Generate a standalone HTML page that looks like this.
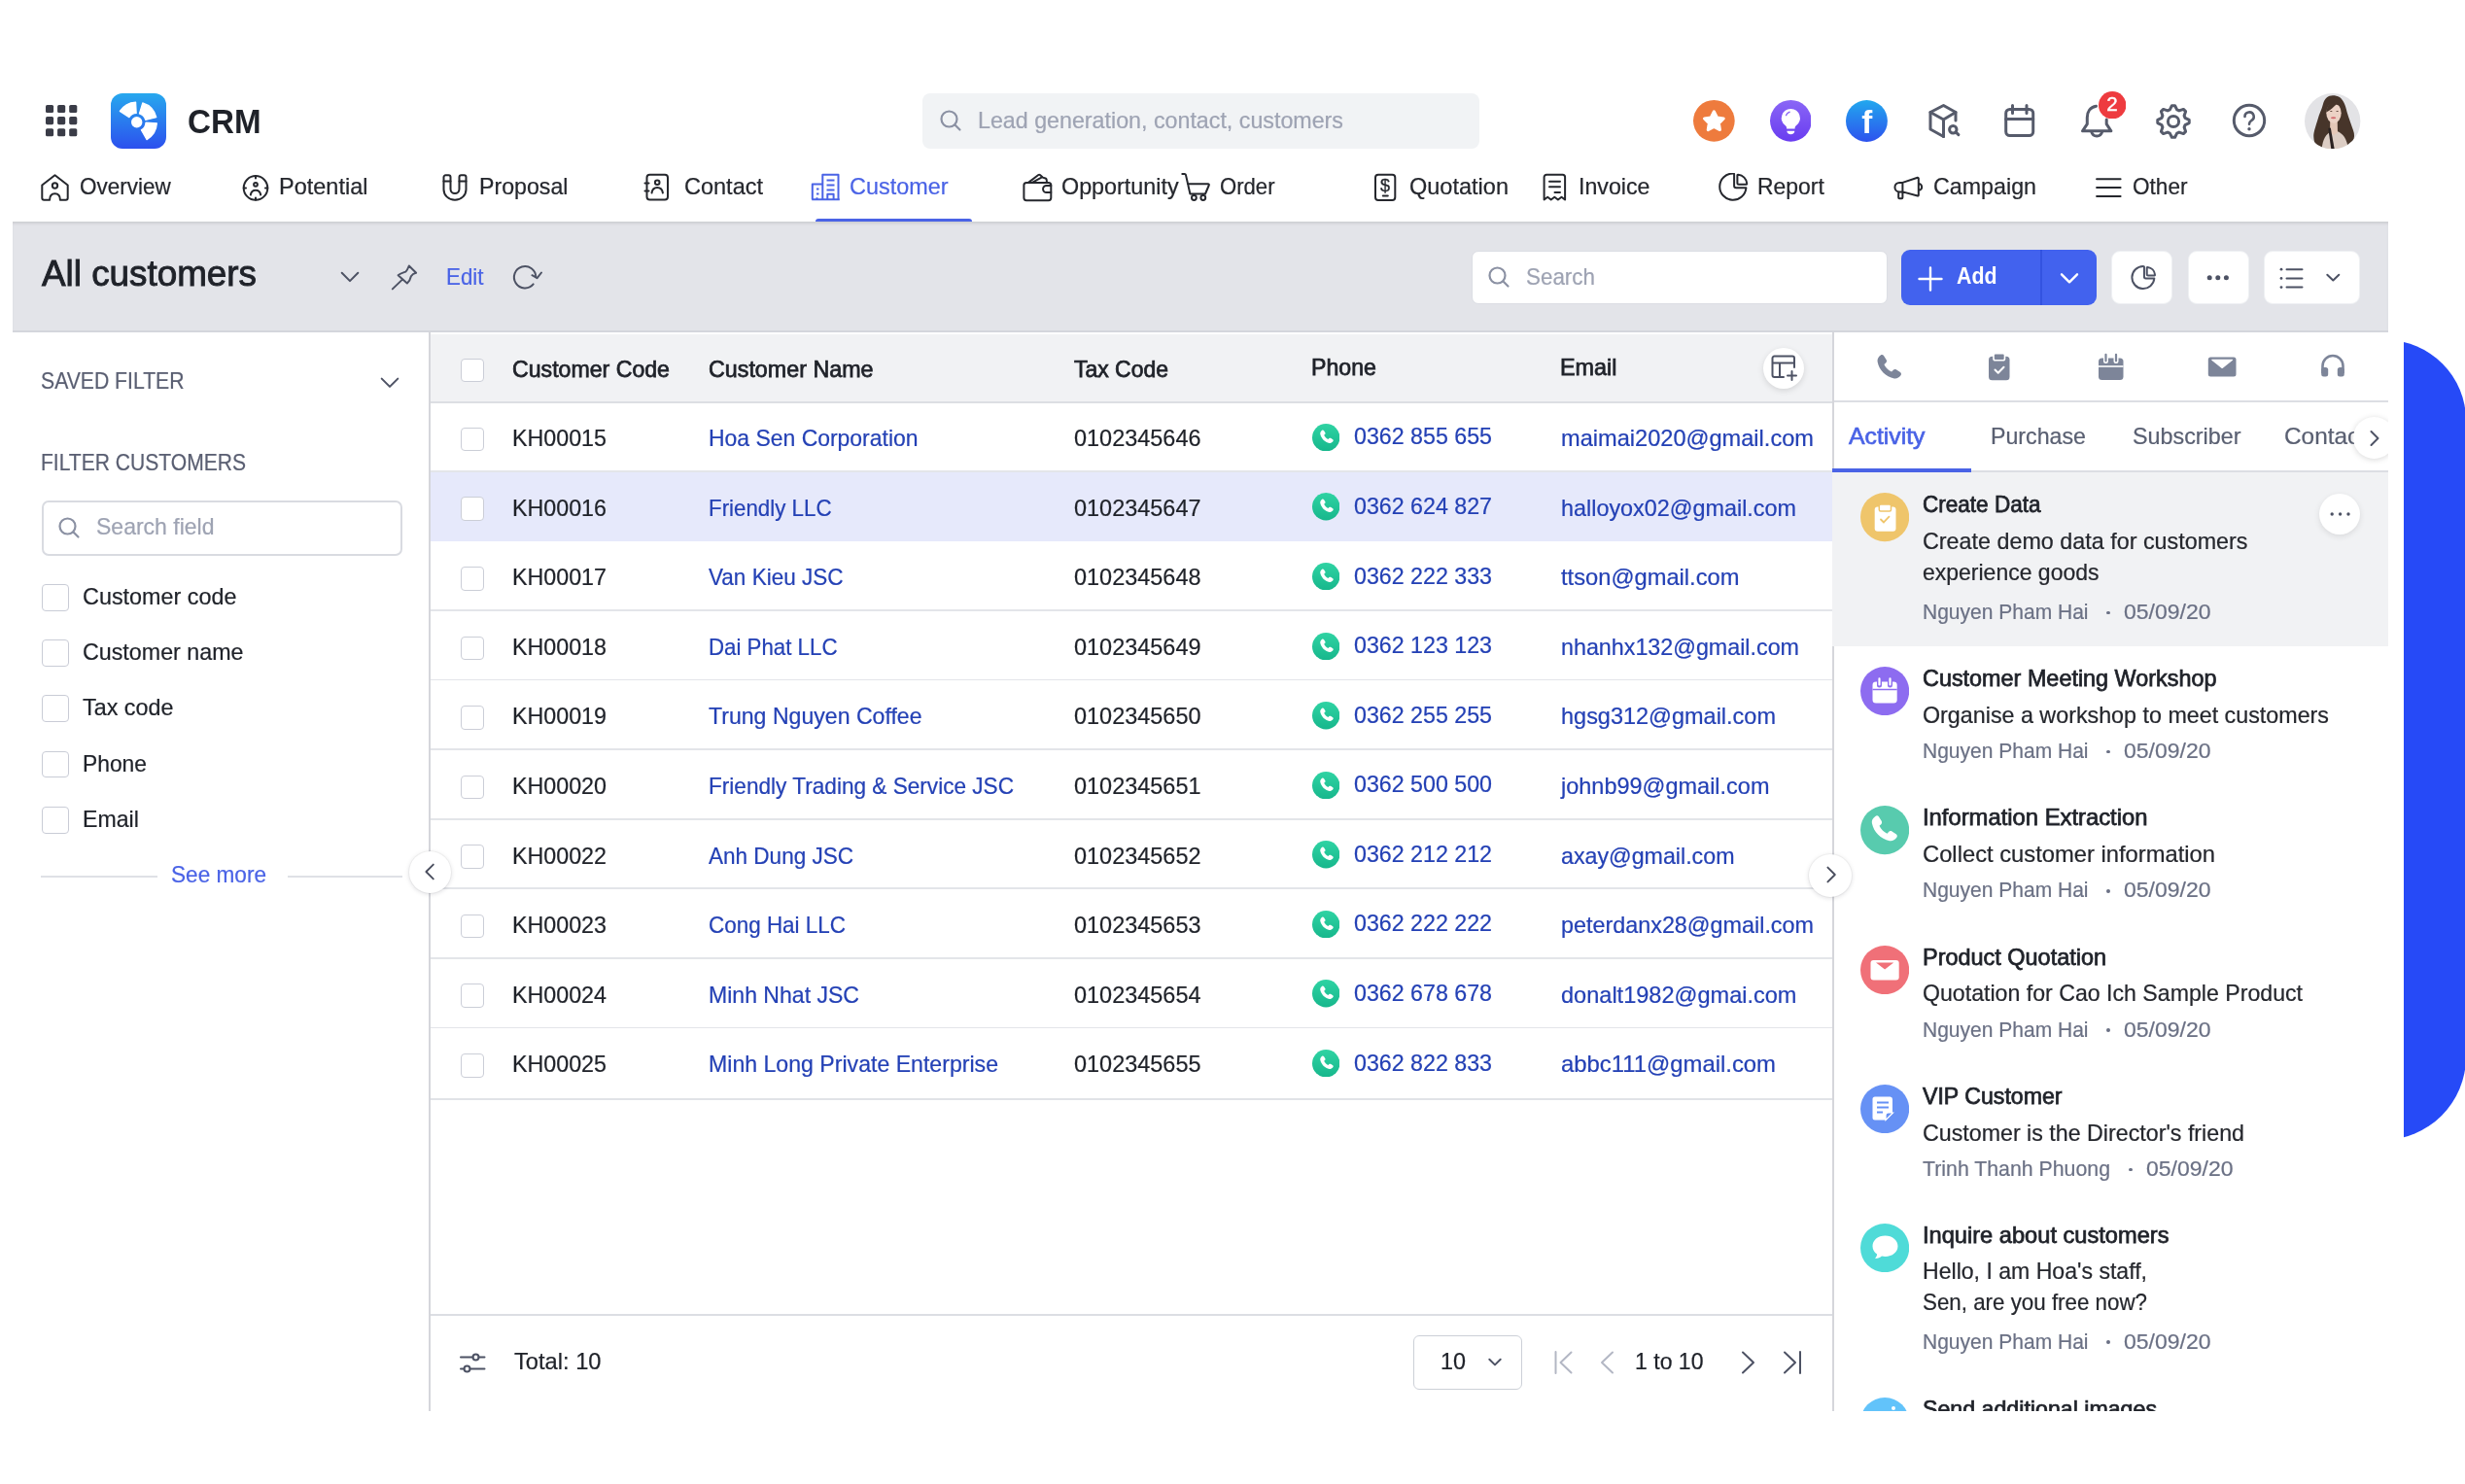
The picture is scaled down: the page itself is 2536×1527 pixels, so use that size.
<!DOCTYPE html>
<html lang="en"><head><meta charset="utf-8"><title>CRM - All customers</title>
<style>
html,body{margin:0;padding:0;background:#fff;}
body{width:2536px;height:1527px;position:relative;overflow:hidden;font-family:"Liberation Sans", sans-serif;}
#app{position:absolute;left:0;top:0;width:2536px;height:1527px;overflow:hidden;will-change:transform;}
#app div,#app svg,#app span{position:absolute;box-sizing:border-box;}
.t{white-space:nowrap;line-height:1;transform-origin:0 0;}
</style></head>
<body><div id="app">
<div style="left:2472.7px;top:340px;width:70px;height:850px;overflow:hidden"><div style="left:-236.1px;top:9.8px;width:300px;height:823.3px;border-radius:0 82.5px 85.5px 0;background:#264af7"></div></div>
<svg style="left:47.3px;top:107.9px;" width="33" height="33" viewBox="0 0 33 33" fill="none"><rect x="0.0" y="0.0" width="8.1" height="8.1" rx="1.6" fill="#3a3c47"/><rect x="12.1" y="0.0" width="8.1" height="8.1" rx="1.6" fill="#3a3c47"/><rect x="24.2" y="0.0" width="8.1" height="8.1" rx="1.6" fill="#3a3c47"/><rect x="0.0" y="12.1" width="8.1" height="8.1" rx="1.6" fill="#3a3c47"/><rect x="12.1" y="12.1" width="8.1" height="8.1" rx="1.6" fill="#3a3c47"/><rect x="24.2" y="12.1" width="8.1" height="8.1" rx="1.6" fill="#3a3c47"/><rect x="0.0" y="24.2" width="8.1" height="8.1" rx="1.6" fill="#3a3c47"/><rect x="12.1" y="24.2" width="8.1" height="8.1" rx="1.6" fill="#3a3c47"/><rect x="24.2" y="24.2" width="8.1" height="8.1" rx="1.6" fill="#3a3c47"/></svg>
<svg style="left:114px;top:96px;" width="57" height="57" viewBox="0 0 57 57" fill="none"><defs><linearGradient id="lg" x1="0" y1="0" x2="0" y2="1"><stop offset="0" stop-color="#27a8ee"/><stop offset="1" stop-color="#2c50ee"/></linearGradient></defs><rect width="57" height="57" rx="12" fill="url(#lg)"/><path d="M18.90 24.63L9.34 18.43A20.7 20.7 0 0 1 25.62 9.03L26.21 20.41A9.3 9.3 0 0 0 18.90 24.63Z" fill="#fff" stroke="#fff" stroke-width="1.2" stroke-linejoin="round"/><path d="M29.42 20.81L32.75 9.90A20.7 20.7 0 0 1 46.79 24.69L35.72 27.45A9.3 9.3 0 0 0 29.42 20.81Z" fill="#fff" stroke="#fff" stroke-width="1.2" stroke-linejoin="round"/><path d="M35.99 30.19L47.37 30.78A20.7 20.7 0 0 1 37.05 47.63L31.35 37.75A9.3 9.3 0 0 0 35.99 30.19Z" fill="#fff" stroke="#fff" stroke-width="1.2" stroke-linejoin="round"/><circle cx="26.7" cy="29.7" r="5.7" fill="#fff"/></svg>
<div style="left:949px;top:96.4px;width:572.5px;height:56.3px;background:#f1f3f5;border-radius:8px;"></div>
<svg style="left:966px;top:112px;" width="24" height="24" viewBox="0 0 24 24" fill="none"><circle cx="10.5" cy="10.5" r="8" stroke="#8b91a3" stroke-width="2.2"/><path d="M16.5 16.5L21.5 21.5" stroke="#8b91a3" stroke-width="2.2" stroke-linecap="round"/></svg>
<svg style="left:1742.0500000000002px;top:102.94999999999999px;" width="42.7" height="42.7" viewBox="0 0 42.7 42.7" fill="none"><circle cx="21.35" cy="21.35" r="21.35" fill="#ee7b3d"/><polygon points="21.35,11.80 24.47,17.91 31.24,18.99 26.39,23.84 27.46,30.61 21.35,27.50 15.24,30.61 16.31,23.84 11.46,18.99 18.23,17.91" fill="#fff" stroke="#fff" stroke-width="3" stroke-linejoin="round"/></svg>
<svg style="left:1820.65px;top:102.94999999999999px;" width="42.7" height="42.7" viewBox="0 0 42.7 42.7" fill="none"><defs><linearGradient id="pg" x1="0" y1="0" x2="0" y2="1"><stop offset="0" stop-color="#8a66f6"/><stop offset="1" stop-color="#693cf0"/></linearGradient></defs><circle cx="21.35" cy="21.35" r="21.35" fill="url(#pg)"/><g transform="translate(21.35 22) scale(1.06) translate(-21.35 -21.800)"><path d="M21.35 9.5a9 9 0 0 0-5.2 16.3c.8.6 1.2 1.4 1.2 2.4v.6h8v-.6c0-1 .4-1.8 1.2-2.4A9 9 0 0 0 21.35 9.5z" fill="#fff"/><path d="M17.6 31h7.5c0 2-1.6 3.4-3.75 3.4S17.6 33 17.6 31z" fill="#fff"/><path d="M16.8 15.8a5.5 5.5 0 0 1 3.4-3.2" stroke="#8a63f5" stroke-width="1.3" stroke-linecap="round"/></g></svg>
<svg style="left:1899.1499999999999px;top:102.85px;" width="42.9" height="42.9" viewBox="0 0 42.9 42.9" fill="none"><defs><linearGradient id="fg" x1="0" y1="0" x2="0" y2="1"><stop offset="0" stop-color="#22a8ee"/><stop offset="1" stop-color="#2d52ee"/></linearGradient></defs><circle cx="21.45" cy="21.45" r="21.45" fill="url(#fg)"/></svg>
<svg style="left:1982px;top:104.7px;" width="38" height="38" viewBox="0 0 38 38" fill="none"><path d="M30 19V10.5L17.5 3.5 4 10.5v17.5l13.5 7.5" stroke="#565b6b" stroke-width="3" stroke-linecap="round" stroke-linejoin="round"/><path d="M4 10.5l13.5 7.5L30 10.5M17.5 18v17.5" stroke="#565b6b" stroke-width="3" stroke-linecap="round" stroke-linejoin="round"/><circle cx="27.3" cy="28.2" r="3.7" stroke="#565b6b" stroke-width="3" stroke-linecap="round" stroke-linejoin="round"/><path d="M30.3 31.2l2.6 2.5" stroke="#565b6b" stroke-width="3" stroke-linecap="round" stroke-linejoin="round"/></svg>
<svg style="left:2060px;top:104.8px;" width="36" height="38" viewBox="0 0 36 38" fill="none"><rect x="3.7" y="7.5" width="28" height="27" rx="4" stroke="#565b6b" stroke-width="3" stroke-linecap="round" stroke-linejoin="round"/><path d="M3.7 17.5h28M10.5 3.5v8M25 3.5v8" stroke="#565b6b" stroke-width="3" stroke-linecap="round" stroke-linejoin="round"/></svg>
<svg style="left:2138.5px;top:105.5px;" width="38" height="38" viewBox="0 0 38 38" fill="none"><path d="M17.5 3.3C11.5 4.3 8.3 9 8.3 15v6.7L3.5 28.800h29.400l-4.700-7.100V17" stroke="#565b6b" stroke-width="3" stroke-linecap="round" stroke-linejoin="round"/><path d="M12.700 29.500a5.700 6.200 0 0 0 11 0" stroke="#565b6b" stroke-width="3" stroke-linecap="round" stroke-linejoin="round"/></svg>
<svg style="left:2158.5px;top:94.1px;" width="28.4" height="28.4" viewBox="0 0 28.4 28.4" fill="none"><circle cx="14.2" cy="14.2" r="14.2" fill="#ee3b3f"/></svg>
<svg style="left:2216.6px;top:105.6px;" width="38" height="38" viewBox="0 0 38 38" fill="none"><path d="M17.40 2.78 L20.60 2.78 L22.66 6.94 L24.94 7.89 L29.34 6.40 L31.60 8.66 L30.11 13.06 L31.06 15.34 L35.22 17.40 L35.22 20.60 L31.06 22.66 L30.11 24.94 L31.60 29.34 L29.34 31.60 L24.94 30.11 L22.66 31.06 L20.60 35.22 L17.40 35.22 L15.34 31.06 L13.06 30.11 L8.66 31.60 L6.40 29.34 L7.89 24.94 L6.94 22.66 L2.78 20.60 L2.78 17.40 L6.94 15.34 L7.89 13.06 L6.40 8.66 L8.66 6.40 L13.06 7.89 L15.34 6.94Z" stroke="#565b6b" stroke-width="3" stroke-linejoin="round"/><circle cx="19" cy="19" r="5.6" stroke="#565b6b" stroke-width="3" stroke-linecap="round" stroke-linejoin="round"/></svg>
<svg style="left:2295.2px;top:105px;" width="38" height="38" viewBox="0 0 38 38" fill="none"><circle cx="19" cy="19" r="15.7" stroke="#565b6b" stroke-width="3" stroke-linecap="round" stroke-linejoin="round"/><path d="M14.5 15a4.6 4.6 0 1 1 6.800 4c-1.600 1-2.300 1.800-2.300 3.700" stroke="#565b6b" stroke-width="2.6" stroke-linecap="round"/><circle cx="19" cy="27.800" r="1.700" fill="#565b6b"/></svg>
<svg style="left:2371.4px;top:95.8px;" width="57.4" height="57.4" viewBox="0 0 57.4 57.4" fill="none"><defs><clipPath id="av"><circle cx="28.7" cy="28.7" r="28.7"/></clipPath><filter id="avb" x="-10%" y="-10%" width="120%" height="120%"><feGaussianBlur stdDeviation="0.55"/></filter></defs><g clip-path="url(#av)"><rect width="58" height="58" fill="#e3e3e6"/><g filter="url(#avb)"><path d="M29 2.300C24 2.300 20.500 5.500 19 11C17.500 17 15 21 13.500 27C11.500 34 9 40 9.300 45C9.500 49 10.500 51.500 12 53L20 58L44 58L49.500 50C51.500 46 51.500 42 50 38C48 32 45.500 26 43.500 19C42 12 39.500 6.500 36 4C34 2.800 31.500 2.300 29 2.300Z" fill="#46362b"/><path d="M17.500 58C18.500 47 22.500 41.500 27 39.500L33.500 39C39.500 41.500 43.500 46.500 45 58Z" fill="#dccdc4"/><path d="M26.300 28h7.400l.3 12.500-4 2.500-4-2.500z" fill="#e4c7b7"/><ellipse cx="30" cy="20.300" rx="7.700" ry="10.400" fill="#ecd2c5"/><path d="M22.300 19.500C23 12.500 26.500 8.800 31.500 8.500C35 8.500 37.600 11 38.200 15C36.200 12.600 34.200 11.500 32.300 11.700C30 13.800 26.500 17.500 22.300 19.500Z" fill="#46362b"/><ellipse cx="27.300" cy="18.600" rx="1.200" ry=".500" fill="#5e463b"/><ellipse cx="33.600" cy="18.600" rx="1.200" ry=".500" fill="#5e463b"/><ellipse cx="29.600" cy="25.200" rx="2.600" ry="1" fill="#d26a6e"/><path d="M24.300 36L26.800 35.500L30.800 58L27.400 58Z" fill="#2a2220"/></g></g></svg>
<svg style="left:41px;top:178px;" width="31" height="30" viewBox="0 0 31 30" fill="none"><path d="M15.500 2.300L2.300 12.500v13.300a2 2 0 0 0 2 2h5.800c0-3 1-6.500 5.400-6.500s5.400 3.500 5.400 6.500h5.800a2 2 0 0 0 2-2V12.500z" stroke="#25272d" stroke-width="2" stroke-linecap="round" stroke-linejoin="round"/><circle cx="15.500" cy="13" r="2.700" stroke="#25272d" stroke-width="2" stroke-linecap="round" stroke-linejoin="round"/></svg>
<svg style="left:247.8px;top:178px;" width="30" height="30" viewBox="0 0 30 30" fill="none"><circle cx="15" cy="15.400" r="12.300" stroke="#25272d" stroke-width="2" stroke-linecap="round" stroke-linejoin="round"/><circle cx="15" cy="11.800" r="1.900" stroke="#25272d" stroke-width="2" stroke-linecap="round" stroke-linejoin="round"/><path d="M9.800 22.500c.5-3.200 2.600-4.800 5.200-4.800s4.700 1.600 5.200 4.800" stroke="#25272d" stroke-width="2" stroke-linecap="round" stroke-linejoin="round"/><path d="M15 3.100v2.300M15 25.400v2.300M2.700 15.400H5M25 15.400h2.300" stroke="#25272d" stroke-width="2" stroke-linecap="round" stroke-linejoin="round"/></svg>
<svg style="left:454px;top:178px;" width="28" height="30" viewBox="0 0 28 30" fill="none"><path d="M4.500 2.300h3a2 2 0 0 1 2 2v12.200a4.500 4.500 0 0 0 9 0V4.300a2 2 0 0 1 2-2h3a2 2 0 0 1 2 2v12.700a11.500 10.800 0 0 1-23 0V4.300a2 2 0 0 1 2-2z" stroke="#25272d" stroke-width="2" stroke-linecap="round" stroke-linejoin="round"/><path d="M2.500 8.500h7M18.500 8.500h7" stroke="#25272d" stroke-width="2" stroke-linecap="round" stroke-linejoin="round"/></svg>
<svg style="left:661px;top:178px;" width="29" height="30" viewBox="0 0 29 30" fill="none"><rect x="4.500" y="1.800" width="21.500" height="25.800" rx="3" stroke="#25272d" stroke-width="2" stroke-linecap="round" stroke-linejoin="round"/><circle cx="15.200" cy="9.800" r="2.300" stroke="#25272d" stroke-width="2" stroke-linecap="round" stroke-linejoin="round"/><path d="M9.500 20.500c.6-3.700 2.800-5.500 5.700-5.500s5.100 1.800 5.700 5.500" stroke="#25272d" stroke-width="2" stroke-linecap="round" stroke-linejoin="round"/><path d="M2.500 10.500h4M2.500 18.500h4" stroke="#25272d" stroke-width="2" stroke-linecap="round" stroke-linejoin="round"/></svg>
<svg style="left:833.5px;top:178px;" width="31" height="30" viewBox="0 0 31 30" fill="none"><path d="M12.300 27.300V1.800h16.200v25.500M1.800 27.300V11.500h10.500M1.200 27.300h28.600" stroke="#4a63e6" stroke-width="2" stroke-linejoin="round"/><path d="M16.500 7.500h8M16.500 12.500h8M16.500 17.500h8M6 16.500h2.500M6 21.500h2.500" stroke="#4a63e6" stroke-width="2" stroke-linejoin="round"/><path d="M17.300 27.300v-5.500h6.300v5.500M6.500 27.300v-2" stroke="#4a63e6" stroke-width="2" stroke-linejoin="round"/></svg>
<div style="left:838.5px;top:225px;width:161px;height:5px;background:#4a63e6;border-radius:3px 3px 0 0;"></div>
<svg style="left:1052px;top:178px;" width="31" height="30" viewBox="0 0 31 30" fill="none"><rect x="1.400" y="9.900" width="27.900" height="18.300" rx="2.600" stroke="#25272d" stroke-width="2" stroke-linecap="round" stroke-linejoin="round"/><path d="M6.300 9.600L16.300 2Q17.200 1.400 18 2.100L20.800 4.600L23.600 5.500Q24.500 5.900 24.700 6.900L25 9.600M10.800 9.300L19.900 4.400" stroke="#25272d" stroke-width="2" stroke-linecap="round" stroke-linejoin="round"/><path d="M29.300 13H24.600a3.550 3.550 0 0 0 0 7.100H29.300" stroke="#25272d" stroke-width="2" stroke-linecap="round" stroke-linejoin="round"/></svg>
<svg style="left:1215px;top:178px;" width="32" height="30" viewBox="0 0 32 30" fill="none"><path d="M1.300 1H3.600a1.500 1.500 0 0 1 1.400 1.100L9.400 21.500H25L28.800 12.500a1 1 0 0 0-.900-1.300H6.900" stroke="#25272d" stroke-width="2" stroke-linecap="round" stroke-linejoin="round"/><circle cx="13.400" cy="25.500" r="2.400" stroke="#25272d" stroke-width="2" stroke-linecap="round" stroke-linejoin="round"/><circle cx="22.800" cy="25.500" r="2.400" stroke="#25272d" stroke-width="2" stroke-linecap="round" stroke-linejoin="round"/></svg>
<svg style="left:1412.5px;top:178px;" width="26" height="30" viewBox="0 0 26 30" fill="none"><rect x="2" y="1.700" width="20.300" height="26.300" rx="3" stroke="#25272d" stroke-width="2" stroke-linecap="round" stroke-linejoin="round"/><path d="M9.800 23.500h5" stroke="#25272d" stroke-width="2" stroke-linecap="round" stroke-linejoin="round"/></svg>
<svg style="left:1586px;top:178px;" width="28" height="30" viewBox="0 0 28 30" fill="none"><path d="M2.600 27.500V4.300a2.500 2.500 0 0 1 2.500-2.500h16.500a2.500 2.500 0 0 1 2.500 2.500v23.200l-3.600-2.800-3.600 2.800-3.600-2.800-3.600 2.800-3.500-2.800z" stroke="#25272d" stroke-width="2" stroke-linecap="round" stroke-linejoin="round"/><path d="M8 8.700h11M8 14.300h11M13.500 19.900h5.500" stroke="#25272d" stroke-width="2" stroke-linecap="round" stroke-linejoin="round"/></svg>
<svg style="left:1767px;top:178px;" width="32" height="30" viewBox="0 0 32 30" fill="none"><path d="M17.100 1.200V13.300a2 2 0 0 0 2 2H29.400A13.600 13.600 0 1 1 15.900 .500c.8 0 1.200 .300 1.200 .700z" stroke="#25272d" stroke-width="2" stroke-linecap="round" stroke-linejoin="round"/><path d="M20.400 2.300V10.200a1.500 1.500 0 0 0 1.500 1.500H29.600c.500 0 .800-.400 .600-1A10 10 0 0 0 21.400 1.700c-.600-.200-1 .100-1 .600z" stroke="#25272d" stroke-width="2" stroke-linecap="round" stroke-linejoin="round"/></svg>
<svg style="left:1948px;top:178px;" width="32" height="30" viewBox="0 0 32 30" fill="none"><path d="M9.400 9.900H6.200a4.750 4.750 0 0 0 0 9.500H9.400L24.800 23.500a.800 .800 0 0 0 1-.800V5.600a.800 .800 0 0 0-1-.800zM9.400 9.900V19.400M5.200 19.400V25.300a1 1 0 0 0 1 1H8.400a1 1 0 0 0 1-1V19.400M25.800 11a3.400 3.400 0 0 1 0 6.800" stroke="#25272d" stroke-width="2" stroke-linecap="round" stroke-linejoin="round"/></svg>
<svg style="left:2155px;top:178px;" width="29" height="30" viewBox="0 0 29 30" fill="none"><path d="M2.100 6.200h24.500M2.100 15.100h24.500M2.100 24.100h24.500" stroke="#25272d" stroke-width="2" stroke-linecap="round" stroke-linejoin="round"/></svg>
<div style="left:13px;top:228px;width:2444px;height:114px;background:#e3e4e9;box-shadow:inset 0 3px 3px -1px rgba(0,0,0,.10);border-bottom:2px solid #d4d6dc;"></div>
<svg style="left:349px;top:277px;" width="22" height="16" viewBox="0 0 22 16" fill="none"><path d="M2.700 3.800l8.300 8.300 8.300-8.300" stroke="#4d5264" stroke-width="2" stroke-linecap="round" stroke-linejoin="round"/></svg>
<svg style="left:401px;top:271px;" width="30" height="30" viewBox="0 0 30 30" fill="none"><path d="M19.800 2.500L27.100 9.800C25 10.300 23 11.500 21.900 13.200C21.300 15.800 20.200 18.600 17.900 20.500L8.600 12.200C11 10 14 9.600 16.400 8.600C18 7 19 4.600 19.800 2.500ZM13.200 16.400L2.800 26.400" stroke="#4d5264" stroke-width="2" stroke-linecap="round" stroke-linejoin="round"/></svg>
<svg style="left:526px;top:270px;" width="34" height="32" viewBox="0 0 34 32" fill="none"><path d="M22.680 22.400A11.200 11.200 0 1 1 25.300 15.200" stroke="#4d5264" stroke-width="2" stroke-linecap="round" stroke-linejoin="round"/><path d="M21.400 13.200L26.600 16.200L31 10.500" stroke="#4d5264" stroke-width="2" stroke-linecap="round" stroke-linejoin="round"/></svg>
<div style="left:1513.7px;top:257.8px;width:428px;height:55.3px;background:#fff;border-radius:7px;border:1.5px solid #dcdee4;"></div>
<svg style="left:1529.5px;top:272.5px;" width="24" height="24" viewBox="0 0 24 24" fill="none"><circle cx="10.500" cy="10.500" r="8" stroke="#8b91a3" stroke-width="2.200"/><path d="M16.500 16.500L21.500 21.500" stroke="#8b91a3" stroke-width="2.200" stroke-linecap="round"/></svg>
<div style="left:1956.4px;top:256.9px;width:200.6px;height:57.2px;background:#4262ee;border-radius:9px;"></div>
<div style="left:2099.2px;top:256.9px;width:2px;height:57.2px;background:#3353e0;"></div>
<svg style="left:1973px;top:274px;" width="26" height="26" viewBox="0 0 26 26" fill="none"><path d="M13 1.500v23M1.500 13h23" stroke="#fff" stroke-width="2.400" stroke-linecap="round"/></svg>
<svg style="left:2118px;top:279px;" width="22" height="16" viewBox="0 0 22 16" fill="none"><path d="M3 3.300l8 8 8-8" stroke="#fff" stroke-width="2.400" stroke-linecap="round" stroke-linejoin="round"/></svg>
<div style="left:2171.8px;top:257.8px;width:63.2px;height:55.5px;background:#fff;border-radius:9px;border:1px solid #eef0f3;"></div>
<svg style="left:2189.5px;top:272px;" width="30" height="30" viewBox="0 0 30 30" fill="none"><g transform="translate(1.500 1.600) scale(0.845)"><path d="M17.100 1.200V13.300a2 2 0 0 0 2 2H29.400A13.600 13.600 0 1 1 15.900 .500c.8 0 1.200 .300 1.200 .700z" stroke="#4d5264" stroke-width="2.350" stroke-linejoin="round"/><path d="M20.400 2.300V10.200a1.500 1.500 0 0 0 1.500 1.500H29.600c.500 0 .800-.400 .600-1A10 10 0 0 0 21.400 1.700c-.600-.200-1 .100-1 .600z" stroke="#4d5264" stroke-width="2.350" stroke-linejoin="round"/></g></svg>
<div style="left:2250.7px;top:257.8px;width:63.2px;height:55.5px;background:#fff;border-radius:9px;border:1px solid #eef0f3;"></div>
<svg style="left:2268px;top:281px;" width="28" height="10" viewBox="0 0 28 10" fill="none"><circle cx="5.200" cy="4.800" r="2.500" fill="#4d5264"/><circle cx="13.800" cy="4.800" r="2.500" fill="#4d5264"/><circle cx="22.400" cy="4.800" r="2.500" fill="#4d5264"/></svg>
<div style="left:2329.1px;top:257.8px;width:99.2px;height:55.5px;background:#fff;border-radius:9px;border:1px solid #eef0f3;"></div>
<svg style="left:2343.5px;top:274px;" width="27" height="25" viewBox="0 0 27 25" fill="none"><path d="M8.500 3.200h16M8.500 12.400h16M8.500 21.600h16" stroke="#4d5264" stroke-width="2" stroke-linecap="round" stroke-linejoin="round"/><circle cx="3" cy="3.200" r="1.400" fill="#4d5264"/><circle cx="3" cy="12.400" r="1.400" fill="#4d5264"/><circle cx="3" cy="21.600" r="1.400" fill="#4d5264"/></svg>
<svg style="left:2390.5px;top:278.5px;" width="19" height="14" viewBox="0 0 19 14" fill="none"><path d="M3.300 3.700l6 5.800 6-5.800" stroke="#4d5264" stroke-width="2" stroke-linecap="round" stroke-linejoin="round"/></svg>
<svg style="left:390px;top:385px;" width="22" height="16" viewBox="0 0 22 16" fill="none"><path d="M2.700 4.600l8.300 8.300 8.300-8.300" stroke="#4d5264" stroke-width="2" stroke-linecap="round" stroke-linejoin="round"/></svg>
<div style="left:42.5px;top:514.5px;width:371.5px;height:57px;background:#fff;border-radius:7px;border:2px solid #d9dbe1;"></div>
<svg style="left:59px;top:530.5px;" width="24" height="24" viewBox="0 0 24 24" fill="none"><circle cx="10.500" cy="10.500" r="8" stroke="#8b91a3" stroke-width="2.200"/><path d="M16.500 16.500L21.500 21.500" stroke="#8b91a3" stroke-width="2.200" stroke-linecap="round"/></svg>
<div style="left:42.8px;top:600.8px;width:27.8px;height:27.8px;background:#fff;border-radius:4px;border:1.5px solid #c9ccd6;"></div>
<div style="left:42.8px;top:658.05px;width:27.8px;height:27.8px;background:#fff;border-radius:4px;border:1.5px solid #c9ccd6;"></div>
<div style="left:42.8px;top:715.3px;width:27.8px;height:27.8px;background:#fff;border-radius:4px;border:1.5px solid #c9ccd6;"></div>
<div style="left:42.8px;top:772.55px;width:27.8px;height:27.8px;background:#fff;border-radius:4px;border:1.5px solid #c9ccd6;"></div>
<div style="left:42.8px;top:829.8px;width:27.8px;height:27.8px;background:#fff;border-radius:4px;border:1.5px solid #c9ccd6;"></div>
<div style="left:42px;top:901px;width:120px;height:2px;background:#dfe1e6;"></div>
<div style="left:296px;top:901px;width:118px;height:2px;background:#dfe1e6;"></div>
<div style="left:441.2px;top:342px;width:1.9px;height:1109.5px;background:#d5d6db;"></div>
<div style="left:442.5px;top:343.5px;width:1442.5px;height:70px;background:#f1f2f4;"></div>
<div style="left:442.5px;top:412.7px;width:1442.5px;height:2px;background:#dcdee3;"></div>
<div style="left:442.5px;top:486.27px;width:1442.5px;height:70.57px;background:#e6e9fb;"></div>
<div style="left:442.5px;top:627.2099999999999px;width:1442.5px;height:1.6px;background:#e3e5e9;"></div>
<div style="left:442.5px;top:698.78px;width:1442.5px;height:1.6px;background:#e3e5e9;"></div>
<div style="left:442.5px;top:770.3499999999999px;width:1442.5px;height:1.6px;background:#e3e5e9;"></div>
<div style="left:442.5px;top:841.9199999999998px;width:1442.5px;height:1.6px;background:#e3e5e9;"></div>
<div style="left:442.5px;top:913.4899999999999px;width:1442.5px;height:1.6px;background:#e3e5e9;"></div>
<div style="left:442.5px;top:985.06px;width:1442.5px;height:1.6px;background:#e3e5e9;"></div>
<div style="left:442.5px;top:1056.6299999999999px;width:1442.5px;height:1.6px;background:#e3e5e9;"></div>
<div style="left:442.5px;top:484.07px;width:1442.5px;height:1.6px;background:#e3e5e9;"></div>
<div style="left:442.5px;top:1130.2px;width:1442.5px;height:1.8px;background:#e1e3e7;"></div>
<div style="left:473.6px;top:368.7px;width:24.8px;height:24.8px;background:#fff;border-radius:4px;border:1.700px solid #cbced7;"></div>
<div style="left:473.5px;top:439.8px;width:24.6px;height:24.6px;background:#fff;border-radius:4px;border:1.700px solid #cbced7;"></div>
<svg style="left:1350px;top:435.9px;" width="28.4" height="28.4" viewBox="0 0 28.400 28.400" fill="none"><defs><linearGradient id="gp0" x1="0" y1="0" x2="0" y2="1"><stop offset="0" stop-color="#2fd3a3"/><stop offset="1" stop-color="#17b78c"/></linearGradient></defs><circle cx="14.200" cy="14.200" r="14.200" fill="url(#gp0)"/><path transform="translate(14.2 14.2) scale(1.12) translate(-14.2 -14)" d="M10.600 7.300c.5-.4 1.200-.3 1.600.2l1.300 2c.3.500.2 1.100-.2 1.500l-.9.800c.8 1.700 2.100 3 3.800 3.900l.8-.9c.4-.4 1-.5 1.500-.2l2 1.300c.5.400.6 1.100.2 1.600-.8 1.100-2 1.900-3.300 1.600-4.300-.9-7.700-4.300-8.500-8.500-.2-1.300.6-2.500 1.700-3.300z" fill="#fff"/></svg>
<div style="left:473.5px;top:511.37px;width:24.6px;height:24.6px;background:#fff;border-radius:4px;border:1.700px solid #cbced7;"></div>
<svg style="left:1350px;top:507.46999999999997px;" width="28.4" height="28.4" viewBox="0 0 28.400 28.400" fill="none"><defs><linearGradient id="gp1" x1="0" y1="0" x2="0" y2="1"><stop offset="0" stop-color="#2fd3a3"/><stop offset="1" stop-color="#17b78c"/></linearGradient></defs><circle cx="14.200" cy="14.200" r="14.200" fill="url(#gp1)"/><path transform="translate(14.2 14.2) scale(1.12) translate(-14.2 -14)" d="M10.600 7.300c.5-.4 1.200-.3 1.600.2l1.300 2c.3.500.2 1.100-.2 1.500l-.9.800c.8 1.700 2.100 3 3.800 3.900l.8-.9c.4-.4 1-.5 1.500-.2l2 1.300c.5.400.6 1.100.2 1.600-.8 1.100-2 1.900-3.300 1.600-4.300-.9-7.700-4.300-8.500-8.500-.2-1.300.6-2.500 1.700-3.300z" fill="#fff"/></svg>
<div style="left:473.5px;top:582.9399999999999px;width:24.6px;height:24.6px;background:#fff;border-radius:4px;border:1.700px solid #cbced7;"></div>
<svg style="left:1350px;top:579.04px;" width="28.4" height="28.4" viewBox="0 0 28.400 28.400" fill="none"><defs><linearGradient id="gp2" x1="0" y1="0" x2="0" y2="1"><stop offset="0" stop-color="#2fd3a3"/><stop offset="1" stop-color="#17b78c"/></linearGradient></defs><circle cx="14.200" cy="14.200" r="14.200" fill="url(#gp2)"/><path transform="translate(14.2 14.2) scale(1.12) translate(-14.2 -14)" d="M10.600 7.300c.5-.4 1.200-.3 1.600.2l1.300 2c.3.500.2 1.100-.2 1.500l-.9.800c.8 1.700 2.100 3 3.800 3.900l.8-.9c.4-.4 1-.5 1.500-.2l2 1.300c.5.400.6 1.100.2 1.600-.8 1.100-2 1.900-3.300 1.600-4.300-.9-7.700-4.300-8.500-8.500-.2-1.300.6-2.500 1.700-3.300z" fill="#fff"/></svg>
<div style="left:473.5px;top:654.51px;width:24.6px;height:24.6px;background:#fff;border-radius:4px;border:1.700px solid #cbced7;"></div>
<svg style="left:1350px;top:650.61px;" width="28.4" height="28.4" viewBox="0 0 28.400 28.400" fill="none"><defs><linearGradient id="gp3" x1="0" y1="0" x2="0" y2="1"><stop offset="0" stop-color="#2fd3a3"/><stop offset="1" stop-color="#17b78c"/></linearGradient></defs><circle cx="14.200" cy="14.200" r="14.200" fill="url(#gp3)"/><path transform="translate(14.2 14.2) scale(1.12) translate(-14.2 -14)" d="M10.600 7.300c.5-.4 1.200-.3 1.600.2l1.300 2c.3.500.2 1.100-.2 1.500l-.9.800c.8 1.700 2.100 3 3.800 3.900l.8-.9c.4-.4 1-.5 1.500-.2l2 1.300c.5.400.6 1.100.2 1.600-.8 1.100-2 1.900-3.300 1.600-4.300-.9-7.700-4.300-8.500-8.500-.2-1.300.6-2.500 1.700-3.300z" fill="#fff"/></svg>
<div style="left:473.5px;top:726.08px;width:24.6px;height:24.6px;background:#fff;border-radius:4px;border:1.700px solid #cbced7;"></div>
<svg style="left:1350px;top:722.1800000000001px;" width="28.4" height="28.4" viewBox="0 0 28.400 28.400" fill="none"><defs><linearGradient id="gp4" x1="0" y1="0" x2="0" y2="1"><stop offset="0" stop-color="#2fd3a3"/><stop offset="1" stop-color="#17b78c"/></linearGradient></defs><circle cx="14.200" cy="14.200" r="14.200" fill="url(#gp4)"/><path transform="translate(14.2 14.2) scale(1.12) translate(-14.2 -14)" d="M10.600 7.300c.5-.4 1.200-.3 1.600.2l1.300 2c.3.500.2 1.100-.2 1.500l-.9.800c.8 1.700 2.100 3 3.800 3.900l.8-.9c.4-.4 1-.5 1.500-.2l2 1.300c.5.400.6 1.100.2 1.600-.8 1.100-2 1.900-3.300 1.600-4.300-.9-7.700-4.300-8.500-8.500-.2-1.300.6-2.500 1.700-3.300z" fill="#fff"/></svg>
<div style="left:473.5px;top:797.65px;width:24.6px;height:24.6px;background:#fff;border-radius:4px;border:1.700px solid #cbced7;"></div>
<svg style="left:1350px;top:793.75px;" width="28.4" height="28.4" viewBox="0 0 28.400 28.400" fill="none"><defs><linearGradient id="gp5" x1="0" y1="0" x2="0" y2="1"><stop offset="0" stop-color="#2fd3a3"/><stop offset="1" stop-color="#17b78c"/></linearGradient></defs><circle cx="14.200" cy="14.200" r="14.200" fill="url(#gp5)"/><path transform="translate(14.2 14.2) scale(1.12) translate(-14.2 -14)" d="M10.600 7.300c.5-.4 1.200-.3 1.600.2l1.300 2c.3.500.2 1.100-.2 1.500l-.9.800c.8 1.700 2.100 3 3.800 3.900l.8-.9c.4-.4 1-.5 1.500-.2l2 1.300c.5.400.6 1.100.2 1.600-.8 1.100-2 1.900-3.300 1.600-4.300-.9-7.700-4.300-8.500-8.500-.2-1.300.6-2.500 1.700-3.300z" fill="#fff"/></svg>
<div style="left:473.5px;top:869.2199999999999px;width:24.6px;height:24.6px;background:#fff;border-radius:4px;border:1.700px solid #cbced7;"></div>
<svg style="left:1350px;top:865.3199999999999px;" width="28.4" height="28.4" viewBox="0 0 28.400 28.400" fill="none"><defs><linearGradient id="gp6" x1="0" y1="0" x2="0" y2="1"><stop offset="0" stop-color="#2fd3a3"/><stop offset="1" stop-color="#17b78c"/></linearGradient></defs><circle cx="14.200" cy="14.200" r="14.200" fill="url(#gp6)"/><path transform="translate(14.2 14.2) scale(1.12) translate(-14.2 -14)" d="M10.600 7.300c.5-.4 1.200-.3 1.600.2l1.300 2c.3.500.2 1.100-.2 1.500l-.9.800c.8 1.700 2.100 3 3.800 3.900l.8-.9c.4-.4 1-.5 1.500-.2l2 1.300c.5.400.6 1.100.2 1.600-.8 1.100-2 1.900-3.300 1.600-4.300-.9-7.700-4.300-8.500-8.500-.2-1.300.6-2.500 1.700-3.300z" fill="#fff"/></svg>
<div style="left:473.5px;top:940.79px;width:24.6px;height:24.6px;background:#fff;border-radius:4px;border:1.700px solid #cbced7;"></div>
<svg style="left:1350px;top:936.89px;" width="28.4" height="28.4" viewBox="0 0 28.400 28.400" fill="none"><defs><linearGradient id="gp7" x1="0" y1="0" x2="0" y2="1"><stop offset="0" stop-color="#2fd3a3"/><stop offset="1" stop-color="#17b78c"/></linearGradient></defs><circle cx="14.200" cy="14.200" r="14.200" fill="url(#gp7)"/><path transform="translate(14.2 14.2) scale(1.12) translate(-14.2 -14)" d="M10.600 7.300c.5-.4 1.200-.3 1.600.2l1.300 2c.3.500.2 1.100-.2 1.500l-.9.800c.8 1.700 2.100 3 3.800 3.900l.8-.9c.4-.4 1-.5 1.500-.2l2 1.300c.5.400.6 1.100.2 1.600-.8 1.100-2 1.900-3.300 1.600-4.300-.9-7.700-4.300-8.500-8.500-.2-1.300.6-2.500 1.700-3.300z" fill="#fff"/></svg>
<div style="left:473.5px;top:1012.36px;width:24.6px;height:24.6px;background:#fff;border-radius:4px;border:1.700px solid #cbced7;"></div>
<svg style="left:1350px;top:1008.46px;" width="28.4" height="28.4" viewBox="0 0 28.400 28.400" fill="none"><defs><linearGradient id="gp8" x1="0" y1="0" x2="0" y2="1"><stop offset="0" stop-color="#2fd3a3"/><stop offset="1" stop-color="#17b78c"/></linearGradient></defs><circle cx="14.200" cy="14.200" r="14.200" fill="url(#gp8)"/><path transform="translate(14.2 14.2) scale(1.12) translate(-14.2 -14)" d="M10.600 7.300c.5-.4 1.200-.3 1.600.2l1.300 2c.3.500.2 1.100-.2 1.500l-.9.800c.8 1.700 2.100 3 3.800 3.900l.8-.9c.4-.4 1-.5 1.500-.2l2 1.300c.5.400.6 1.100.2 1.600-.8 1.100-2 1.900-3.300 1.600-4.300-.9-7.700-4.300-8.500-8.500-.2-1.300.6-2.500 1.700-3.300z" fill="#fff"/></svg>
<div style="left:473.5px;top:1083.9299999999998px;width:24.6px;height:24.6px;background:#fff;border-radius:4px;border:1.700px solid #cbced7;"></div>
<svg style="left:1350px;top:1080.03px;" width="28.4" height="28.4" viewBox="0 0 28.400 28.400" fill="none"><defs><linearGradient id="gp9" x1="0" y1="0" x2="0" y2="1"><stop offset="0" stop-color="#2fd3a3"/><stop offset="1" stop-color="#17b78c"/></linearGradient></defs><circle cx="14.200" cy="14.200" r="14.200" fill="url(#gp9)"/><path transform="translate(14.2 14.2) scale(1.12) translate(-14.2 -14)" d="M10.600 7.300c.5-.4 1.200-.3 1.600.2l1.300 2c.3.500.2 1.100-.2 1.500l-.9.800c.8 1.700 2.100 3 3.800 3.900l.8-.9c.4-.4 1-.5 1.500-.2l2 1.300c.5.400.6 1.100.2 1.600-.8 1.100-2 1.900-3.300 1.600-4.300-.9-7.700-4.300-8.500-8.500-.2-1.300.6-2.500 1.700-3.300z" fill="#fff"/></svg>
<div style="left:1813.500px;top:357.600px;width:42.400px;height:42.400px;border-radius:50%;background:#fff;box-shadow:0 2px 6px rgba(0,0,0,.12)"></div>
<svg style="left:1819.5px;top:363px;" width="31" height="31" viewBox="0 0 31 31" fill="none"><path d="M26 15V5.500a2 2 0 0 0-2-2H5.500a2 2 0 0 0-2 2V23a2 2 0 0 0 2 2H15M3.500 10.500H26M11 10.500V25" stroke="#4d5264" stroke-width="2" stroke-linecap="round" stroke-linejoin="round"/><path d="M23.500 19v9M19 23.500h9" stroke="#4d5264" stroke-width="2" stroke-linecap="round"/></svg>
<div style="left:442.5px;top:1352px;width:1442.5px;height:2px;background:#dcdee3;"></div>
<svg style="left:472px;top:1389.5px;" width="28" height="25" viewBox="0 0 28 25" fill="none"><path d="M2 6.500h12.500M20.500 6.500h6M2 18.500h3.500M11.500 18.500h15" stroke="#4d5264" stroke-width="2" stroke-linecap="round" stroke-linejoin="round"/><circle cx="17.500" cy="6.500" r="3" stroke="#4d5264" stroke-width="2" stroke-linecap="round" stroke-linejoin="round"/><circle cx="8.500" cy="18.500" r="3" stroke="#4d5264" stroke-width="2" stroke-linecap="round" stroke-linejoin="round"/></svg>
<div style="left:1454.3px;top:1373.8px;width:111.9px;height:56.4px;background:#fff;border-radius:6px;border:1.800px solid #ccd0d7;"></div>
<svg style="left:1528.5px;top:1395px;" width="18" height="14" viewBox="0 0 18 14" fill="none"><path d="M3.300 3.800l5.700 5.600 5.700-5.600" stroke="#4d5264" stroke-width="2" stroke-linecap="round" stroke-linejoin="round"/></svg>
<svg style="left:1597px;top:1388px;" width="24" height="28" viewBox="0 0 24 28" fill="none"><path d="M3.500 3v22M19.500 3.500L8.500 14l11 10.500" stroke="#b3b7c4" stroke-width="2" stroke-linecap="round" stroke-linejoin="round"/></svg>
<svg style="left:1644px;top:1388px;" width="20" height="28" viewBox="0 0 20 28" fill="none"><path d="M15 3.500L4 14l11 10.500" stroke="#b3b7c4" stroke-width="2" stroke-linecap="round" stroke-linejoin="round"/></svg>
<svg style="left:1788px;top:1388px;" width="20" height="28" viewBox="0 0 20 28" fill="none"><path d="M5 3.500L16 14 5 24.500" stroke="#4d5264" stroke-width="2" stroke-linecap="round" stroke-linejoin="round"/></svg>
<svg style="left:1831.5px;top:1388px;" width="24" height="28" viewBox="0 0 24 28" fill="none"><path d="M20 3v22M4 3.500L15 14 4 24.500" stroke="#4d5264" stroke-width="2" stroke-linecap="round" stroke-linejoin="round"/></svg>
<div style="left:1885px;top:342px;width:1.7px;height:1109.5px;background:#d5d6db;"></div>
<div style="left:1887px;top:411.5px;width:570px;height:2px;background:#dcdee3;"></div>
<div style="left:1887px;top:484px;width:570px;height:2px;background:#dcdee3;"></div>
<div style="left:1885px;top:481.8px;width:143px;height:4.5px;background:#4a63e6;"></div>
<svg style="left:1927px;top:362px;" width="32" height="32" viewBox="0 0 32 32" fill="none"><path d="M7.800 3.500c1-.8 2.500-.6 3.200.5l2.700 4.200c.6 1 .4 2.200-.4 3l-1.900 1.700c1.700 3.400 4.300 6 7.700 7.700l1.700-1.900c.8-.8 2-1 3-.4l4.200 2.700c1.100.7 1.300 2.200.5 3.200-1.600 2.200-4 3.700-6.700 3.200C13 25.700 6.300 19 4.600 10.200c-.5-2.700 1-5.100 3.200-6.700z" fill="#7d8599"/></svg>
<svg style="left:2044px;top:362px;" width="26" height="32" viewBox="0 0 26 32" fill="none"><rect x="2" y="4.800" width="21.500" height="24.500" rx="3.500" fill="#7d8599"/><rect x="7" y="1.800" width="11.500" height="7" rx="1.800" fill="#7d8599" stroke="#fff" stroke-width="1.600"/><path d="M8.500 18.500l3.200 3.200 5.800-6" stroke="#fff" stroke-width="2" stroke-linecap="round" stroke-linejoin="round"/></svg>
<svg style="left:2156.5px;top:362px;" width="30" height="32" viewBox="0 0 30 32" fill="none"><rect x="2" y="6.500" width="25.500" height="22.500" rx="3.500" fill="#7d8599"/><path d="M2 15h25.500" stroke="#fff" stroke-width="1.600"/><path d="M9.500 2.500v7M20 2.500v7" stroke="#fff" stroke-width="5" stroke-linecap="round"/><path d="M9.500 2.800v6.500M20 2.800v6.500" stroke="#7d8599" stroke-width="2.200" stroke-linecap="round"/></svg>
<svg style="left:2269.5px;top:364px;" width="32" height="26" viewBox="0 0 32 26" fill="none"><rect x="1.800" y="3.500" width="28.700" height="20" rx="2.500" fill="#7d8599"/><path d="M5.800 6.300h20.700l-10.350 8.200z" fill="#fff" stroke="#fff" stroke-width="1.200" stroke-linejoin="round"/></svg>
<svg style="left:2385.5px;top:362px;" width="28" height="30" viewBox="0 0 28 30" fill="none"><path d="M3.500 22v-7.500a10.500 10.500 0 0 1 21 0V22" stroke="#7d8599" stroke-width="2.600"/><rect x="2.200" y="16" width="7" height="9.500" rx="2.500" fill="#7d8599"/><rect x="18.800" y="16" width="7" height="9.500" rx="2.500" fill="#7d8599"/></svg>
<div style="left:1885px;top:486px;width:572px;height:178.5px;background:#f1f2f4;"></div>
<svg style="left:1913.600px;top:507.4px" width="50.200" height="50.200" viewBox="0 0 50.200 50.200" fill="none"><circle cx="25.100" cy="25.100" r="25.100" fill="#efc56b"/><rect x="14.700" y="14.400" width="21.800" height="25.300" rx="3" fill="#fff"/><rect x="19.300" y="12" width="12.200" height="7" rx="1.500" fill="#fff" stroke="#efc56b" stroke-width="1.500"/><path d="M21 27.500l3 3 5.500-5.800" stroke="#efc56b" stroke-width="1.800" stroke-linecap="round" stroke-linejoin="round"/></svg>
<div style="left:2167.4px;top:628.6999999999999px;width:3.8px;height:3.8px;background:#6b7185;border-radius:50%;"></div>
<div style="left:2386px;top:508.200px;width:42px;height:42px;border-radius:50%;background:#fff;box-shadow:0 2px 6px rgba(0,0,0,.10)"></div>
<svg style="left:2395.5px;top:524.5px;" width="24" height="8" viewBox="0 0 24 8" fill="none"><circle cx="3.200" cy="4" r="1.700" fill="#4d5264"/><circle cx="11.600" cy="4" r="1.700" fill="#4d5264"/><circle cx="20" cy="4" r="1.700" fill="#4d5264"/></svg>
<svg style="left:1913.600px;top:686px" width="50.200" height="50.200" viewBox="0 0 50.200 50.200" fill="none"><circle cx="25.100" cy="25.100" r="25.100" fill="#8d6cf0"/><rect x="12.500" y="15.500" width="25.200" height="22" rx="3.500" fill="#fff"/><path d="M12.500 23.500h25.200" stroke="#8d6cf0" stroke-width="1.500"/><path d="M19.500 12v7M30.500 12v7" stroke="#8d6cf0" stroke-width="5" stroke-linecap="round"/><path d="M19.500 12.300v6.200M30.500 12.300v6.200" stroke="#fff" stroke-width="2.200" stroke-linecap="round"/></svg>
<div style="left:2167.4px;top:771.5px;width:3.8px;height:3.8px;background:#6b7185;border-radius:50%;"></div>
<svg style="left:1913.600px;top:829.4px" width="50.200" height="50.200" viewBox="0 0 50.200 50.200" fill="none"><circle cx="25.100" cy="25.100" r="25.100" fill="#58cbae"/><path transform="translate(25.1 25.1) scale(1.17) translate(-25.1 -24.6)" d="M16.800 12.500c1-.8 2.400-.6 3.100.5l2.300 3.600c.6 1 .4 2.100-.4 2.900l-1.500 1.300c1.500 3 3.900 5.300 6.900 6.900l1.300-1.500c.8-.8 1.900-1 2.900-.4l3.600 2.300c1.100.7 1.300 2.100.5 3.100-1.500 2-3.700 3.400-6.200 2.900-7.800-1.500-14-7.700-15.500-15.500-.5-2.500.9-4.700 3-6.100z" fill="#fff"/></svg>
<div style="left:2167.4px;top:914.9px;width:3.8px;height:3.8px;background:#6b7185;border-radius:50%;"></div>
<svg style="left:1913.600px;top:972.6px" width="50.200" height="50.200" viewBox="0 0 50.200 50.200" fill="none"><circle cx="25.100" cy="25.100" r="25.100" fill="#f07078"/><rect x="10.500" y="15" width="29.200" height="20.500" rx="3" fill="#fff"/><path d="M16 17.500l9.100 7 9.100-7z" fill="#f07078"/></svg>
<div style="left:2167.4px;top:1058.1px;width:3.8px;height:3.8px;background:#6b7185;border-radius:50%;"></div>
<svg style="left:1913.600px;top:1116px" width="50.200" height="50.200" viewBox="0 0 50.200 50.200" fill="none"><circle cx="25.100" cy="25.100" r="25.100" fill="#6691f5"/><path d="M15 12.500h15.500a2.500 2.500 0 0 1 2.500 2.500v14.500l-7 7H15a2.500 2.500 0 0 1-2.500-2.500V15a2.500 2.500 0 0 1 2.500-2.500z" fill="#fff"/><path d="M17 18.500h12M17 23.500h12M17 28.500h6" stroke="#6691f5" stroke-width="1.800"/><path d="M33.500 29l-7.500 7.500v-5a2.500 2.500 0 0 1 2.500-2.500z" fill="#6691f5" stroke="#fff" stroke-width="1.200"/></svg>
<div style="left:2189.9px;top:1201.5px;width:3.8px;height:3.8px;background:#6b7185;border-radius:50%;"></div>
<svg style="left:1913.600px;top:1258.8px" width="50.200" height="50.200" viewBox="0 0 50.200 50.200" fill="none"><circle cx="25.100" cy="25.100" r="25.100" fill="#4fdbd8"/><path d="M25.500 12.500c-7.500 0-13 4.700-13 10.800 0 3.400 1.800 6.400 4.600 8.300-.1 1.600-.8 3.100-2 4.300 2.800.1 5.200-.8 6.900-2.300 1.100.2 2.300.4 3.500.4 7.500 0 13-4.700 13-10.700s-5.500-10.800-13-10.800z" fill="#fff"/></svg>
<div style="left:2167.4px;top:1379.1999999999998px;width:3.8px;height:3.8px;background:#6b7185;border-radius:50%;"></div>
<svg style="left:1913.500px;top:1438px" width="50.200" height="50.200" viewBox="0 0 50.200 50.200" fill="none"><circle cx="25.100" cy="25.100" r="25.100" fill="#62c3fa"/><circle cx="34" cy="11" r="2" fill="#fff"/></svg>
<span class="t" id="t0" style="left:192.70px;top:107.74px;font-size:34.8px;color:#1f2229;font-weight:700;transform:scaleX(0.9527);">CRM</span>
<span class="t" id="t1" style="left:1005.50px;top:112.82px;font-size:23.6px;color:#9ea3b3;-webkit-text-stroke:.22px #9ea3b3;transform:scaleX(0.9851);">Lead generation, contact, customers</span>
<span class="t" id="t2" style="left:1915.20px;top:109.27px;font-size:33px;color:#fff;font-weight:700;">f</span>
<span class="t" id="t3" style="left:2167.30px;top:97.25px;font-size:20.5px;color:#fff;-webkit-text-stroke:0.4px #fff;">2</span>
<span class="t" id="t4" style="left:81.60px;top:181.22px;font-size:23.6px;color:#25272d;-webkit-text-stroke:.22px #25272d;transform:scaleX(0.9529);">Overview</span>
<span class="t" id="t5" style="left:287.00px;top:181.22px;font-size:23.6px;color:#25272d;-webkit-text-stroke:.22px #25272d;transform:scaleX(0.9964);">Potential</span>
<span class="t" id="t6" style="left:493.00px;top:181.22px;font-size:23.6px;color:#25272d;-webkit-text-stroke:.22px #25272d;transform:scaleX(0.9826);">Proposal</span>
<span class="t" id="t7" style="left:703.50px;top:181.22px;font-size:23.6px;color:#25272d;-webkit-text-stroke:.22px #25272d;transform:scaleX(0.9962);">Contact</span>
<span class="t" id="t8" style="left:874.00px;top:181.22px;font-size:23.6px;color:#4a63e6;-webkit-text-stroke:.22px #4a63e6;transform:scaleX(0.9924);">Customer</span>
<span class="t" id="t9" style="left:1092.00px;top:181.22px;font-size:23.6px;color:#25272d;-webkit-text-stroke:.22px #25272d;transform:scaleX(0.9888);">Opportunity</span>
<span class="t" id="t10" style="left:1255.00px;top:181.22px;font-size:23.6px;color:#25272d;-webkit-text-stroke:.22px #25272d;transform:scaleX(0.9368);">Order</span>
<span class="t" id="t11" style="left:1449.50px;top:181.22px;font-size:23.6px;color:#25272d;-webkit-text-stroke:.22px #25272d;transform:scaleX(0.9968);">Quotation</span>
<span class="t" id="t12" style="left:1419.90px;top:182.06px;font-size:18px;color:#25272d;-webkit-text-stroke:0.3px #25272d;">$</span>
<span class="t" id="t13" style="left:1623.50px;top:181.22px;font-size:23.6px;color:#25272d;-webkit-text-stroke:.22px #25272d;transform:scaleX(0.9831);">Invoice</span>
<span class="t" id="t14" style="left:1808.00px;top:181.22px;font-size:23.6px;color:#25272d;-webkit-text-stroke:.22px #25272d;transform:scaleX(0.9714);">Report</span>
<span class="t" id="t15" style="left:1988.50px;top:181.22px;font-size:23.6px;color:#25272d;-webkit-text-stroke:.22px #25272d;transform:scaleX(0.9856);">Campaign</span>
<span class="t" id="t16" style="left:2194.00px;top:181.22px;font-size:23.6px;color:#25272d;-webkit-text-stroke:.22px #25272d;transform:scaleX(0.9574);">Other</span>
<span class="t" id="t17" style="left:42.50px;top:264.03px;font-size:36px;color:#1f2229;-webkit-text-stroke:0.9px #1f2229;transform:scaleX(1.0229);">All customers</span>
<span class="t" id="t18" style="left:458.50px;top:274.32px;font-size:23.6px;color:#4a63e6;-webkit-text-stroke:.22px #4a63e6;transform:scaleX(0.9470);">Edit</span>
<span class="t" id="t19" style="left:1569.50px;top:274.32px;font-size:23.6px;color:#9ea3b3;-webkit-text-stroke:.22px #9ea3b3;transform:scaleX(0.9496);">Search</span>
<span class="t" id="t20" style="left:2013.30px;top:273.22px;font-size:23.6px;color:#fff;font-weight:700;transform:scaleX(0.9046);">Add</span>
<span class="t" id="t21" style="left:42.00px;top:380.73px;font-size:23px;color:#5a5f72;-webkit-text-stroke:.22px #5a5f72;transform:scaleX(0.9208);">SAVED FILTER</span>
<span class="t" id="t22" style="left:42.00px;top:464.73px;font-size:23px;color:#5a5f72;-webkit-text-stroke:.22px #5a5f72;transform:scaleX(0.9156);">FILTER CUSTOMERS</span>
<span class="t" id="t23" style="left:98.80px;top:530.82px;font-size:23.6px;color:#9ea3b3;-webkit-text-stroke:.22px #9ea3b3;transform:scaleX(0.9752);">Search field</span>
<span class="t" id="t24" style="left:84.50px;top:602.92px;font-size:23.6px;color:#1f2229;-webkit-text-stroke:.22px #1f2229;transform:scaleX(0.9907);">Customer code</span>
<span class="t" id="t25" style="left:84.50px;top:660.17px;font-size:23.6px;color:#1f2229;-webkit-text-stroke:.22px #1f2229;transform:scaleX(0.9860);">Customer name</span>
<span class="t" id="t26" style="left:84.50px;top:717.42px;font-size:23.6px;color:#1f2229;-webkit-text-stroke:.22px #1f2229;transform:scaleX(0.9901);">Tax code</span>
<span class="t" id="t27" style="left:84.50px;top:774.67px;font-size:23.6px;color:#1f2229;-webkit-text-stroke:.22px #1f2229;transform:scaleX(0.9673);">Phone</span>
<span class="t" id="t28" style="left:84.50px;top:831.92px;font-size:23.6px;color:#1f2229;-webkit-text-stroke:.22px #1f2229;transform:scaleX(0.9797);">Email</span>
<span class="t" id="t29" style="left:175.50px;top:888.82px;font-size:23.6px;color:#4a63e6;-webkit-text-stroke:.22px #4a63e6;transform:scaleX(0.9580);">See more</span>
<span class="t" id="t30" style="left:526.50px;top:368.52px;font-size:23.6px;color:#1f2229;-webkit-text-stroke:0.75px #1f2229;transform:scaleX(0.9804);">Customer Code</span>
<span class="t" id="t31" style="left:728.50px;top:368.52px;font-size:23.6px;color:#1f2229;-webkit-text-stroke:0.75px #1f2229;transform:scaleX(0.9868);">Customer Name</span>
<span class="t" id="t32" style="left:1105.00px;top:368.52px;font-size:23.6px;color:#1f2229;-webkit-text-stroke:0.75px #1f2229;transform:scaleX(0.9730);">Tax Code</span>
<span class="t" id="t33" style="left:1349.00px;top:366.82px;font-size:23.6px;color:#1f2229;-webkit-text-stroke:0.75px #1f2229;transform:scaleX(0.9819);">Phone</span>
<span class="t" id="t34" style="left:1605.00px;top:366.82px;font-size:23.6px;color:#1f2229;-webkit-text-stroke:0.75px #1f2229;transform:scaleX(0.9915);">Email</span>
<span class="t" id="t35" style="left:526.50px;top:440.12px;font-size:23.6px;color:#1f2229;-webkit-text-stroke:.22px #1f2229;transform:scaleX(0.9859);">KH00015</span>
<span class="t" id="t36" style="left:728.50px;top:440.12px;font-size:23.6px;color:#2441b5;-webkit-text-stroke:.22px #2441b5;transform:scaleX(0.9722);">Hoa Sen Corporation</span>
<span class="t" id="t37" style="left:1105.00px;top:440.12px;font-size:23.6px;color:#1f2229;-webkit-text-stroke:.22px #1f2229;transform:scaleX(0.9945);">0102345646</span>
<span class="t" id="t38" style="left:1392.50px;top:438.42px;font-size:23.6px;color:#2441b5;-webkit-text-stroke:.22px #2441b5;transform:scaleX(0.9839);">0362 855 655</span>
<span class="t" id="t39" style="left:1606.00px;top:440.12px;font-size:23.6px;color:#2441b5;-webkit-text-stroke:.22px #2441b5;">maimai2020@gmail.com</span>
<span class="t" id="t40" style="left:526.50px;top:511.69px;font-size:23.6px;color:#1f2229;-webkit-text-stroke:.22px #1f2229;transform:scaleX(0.9859);">KH00016</span>
<span class="t" id="t41" style="left:728.50px;top:511.69px;font-size:23.6px;color:#2441b5;-webkit-text-stroke:.22px #2441b5;transform:scaleX(0.9457);">Friendly LLC</span>
<span class="t" id="t42" style="left:1105.00px;top:511.69px;font-size:23.6px;color:#1f2229;-webkit-text-stroke:.22px #1f2229;transform:scaleX(0.9945);">0102345647</span>
<span class="t" id="t43" style="left:1392.50px;top:509.99px;font-size:23.6px;color:#2441b5;-webkit-text-stroke:.22px #2441b5;transform:scaleX(0.9839);">0362 624 827</span>
<span class="t" id="t44" style="left:1606.00px;top:511.69px;font-size:23.6px;color:#2441b5;-webkit-text-stroke:.22px #2441b5;transform:scaleX(0.9907);">halloyox02@gmail.com</span>
<span class="t" id="t45" style="left:526.50px;top:583.26px;font-size:23.6px;color:#1f2229;-webkit-text-stroke:.22px #1f2229;transform:scaleX(0.9859);">KH00017</span>
<span class="t" id="t46" style="left:728.50px;top:583.26px;font-size:23.6px;color:#2441b5;-webkit-text-stroke:.22px #2441b5;transform:scaleX(0.9542);">Van Kieu JSC</span>
<span class="t" id="t47" style="left:1105.00px;top:583.26px;font-size:23.6px;color:#1f2229;-webkit-text-stroke:.22px #1f2229;transform:scaleX(0.9945);">0102345648</span>
<span class="t" id="t48" style="left:1392.50px;top:581.56px;font-size:23.6px;color:#2441b5;-webkit-text-stroke:.22px #2441b5;transform:scaleX(0.9839);">0362 222 333</span>
<span class="t" id="t49" style="left:1606.00px;top:583.26px;font-size:23.6px;color:#2441b5;-webkit-text-stroke:.22px #2441b5;transform:scaleX(1.0048);">ttson@gmail.com</span>
<span class="t" id="t50" style="left:526.50px;top:654.83px;font-size:23.6px;color:#1f2229;-webkit-text-stroke:.22px #1f2229;transform:scaleX(0.9859);">KH00018</span>
<span class="t" id="t51" style="left:728.50px;top:654.83px;font-size:23.6px;color:#2441b5;-webkit-text-stroke:.22px #2441b5;transform:scaleX(0.9441);">Dai Phat LLC</span>
<span class="t" id="t52" style="left:1105.00px;top:654.83px;font-size:23.6px;color:#1f2229;-webkit-text-stroke:.22px #1f2229;transform:scaleX(0.9945);">0102345649</span>
<span class="t" id="t53" style="left:1392.50px;top:653.13px;font-size:23.6px;color:#2441b5;-webkit-text-stroke:.22px #2441b5;transform:scaleX(0.9839);">0362 123 123</span>
<span class="t" id="t54" style="left:1606.00px;top:654.83px;font-size:23.6px;color:#2441b5;-webkit-text-stroke:.22px #2441b5;transform:scaleX(0.9870);">nhanhx132@gmail.com</span>
<span class="t" id="t55" style="left:526.50px;top:726.40px;font-size:23.6px;color:#1f2229;-webkit-text-stroke:.22px #1f2229;transform:scaleX(0.9859);">KH00019</span>
<span class="t" id="t56" style="left:728.50px;top:726.40px;font-size:23.6px;color:#2441b5;-webkit-text-stroke:.22px #2441b5;transform:scaleX(0.9787);">Trung Nguyen Coffee</span>
<span class="t" id="t57" style="left:1105.00px;top:726.40px;font-size:23.6px;color:#1f2229;-webkit-text-stroke:.22px #1f2229;transform:scaleX(0.9945);">0102345650</span>
<span class="t" id="t58" style="left:1392.50px;top:724.70px;font-size:23.6px;color:#2441b5;-webkit-text-stroke:.22px #2441b5;transform:scaleX(0.9839);">0362 255 255</span>
<span class="t" id="t59" style="left:1606.00px;top:726.40px;font-size:23.6px;color:#2441b5;-webkit-text-stroke:.22px #2441b5;transform:scaleX(0.9955);">hgsg312@gmail.com</span>
<span class="t" id="t60" style="left:526.50px;top:797.97px;font-size:23.6px;color:#1f2229;-webkit-text-stroke:.22px #1f2229;transform:scaleX(0.9859);">KH00020</span>
<span class="t" id="t61" style="left:728.50px;top:797.97px;font-size:23.6px;color:#2441b5;-webkit-text-stroke:.22px #2441b5;transform:scaleX(0.9579);">Friendly Trading &amp; Service JSC</span>
<span class="t" id="t62" style="left:1105.00px;top:797.97px;font-size:23.6px;color:#1f2229;-webkit-text-stroke:.22px #1f2229;transform:scaleX(0.9945);">0102345651</span>
<span class="t" id="t63" style="left:1392.50px;top:796.27px;font-size:23.6px;color:#2441b5;-webkit-text-stroke:.22px #2441b5;transform:scaleX(0.9839);">0362 500 500</span>
<span class="t" id="t64" style="left:1606.00px;top:797.97px;font-size:23.6px;color:#2441b5;-webkit-text-stroke:.22px #2441b5;transform:scaleX(0.9956);">johnb99@gmail.com</span>
<span class="t" id="t65" style="left:526.50px;top:869.54px;font-size:23.6px;color:#1f2229;-webkit-text-stroke:.22px #1f2229;transform:scaleX(0.9859);">KH00022</span>
<span class="t" id="t66" style="left:728.50px;top:869.54px;font-size:23.6px;color:#2441b5;-webkit-text-stroke:.22px #2441b5;transform:scaleX(0.9547);">Anh Dung JSC</span>
<span class="t" id="t67" style="left:1105.00px;top:869.54px;font-size:23.6px;color:#1f2229;-webkit-text-stroke:.22px #1f2229;transform:scaleX(0.9945);">0102345652</span>
<span class="t" id="t68" style="left:1392.50px;top:867.84px;font-size:23.6px;color:#2441b5;-webkit-text-stroke:.22px #2441b5;transform:scaleX(0.9839);">0362 212 212</span>
<span class="t" id="t69" style="left:1606.00px;top:869.54px;font-size:23.6px;color:#2441b5;-webkit-text-stroke:.22px #2441b5;transform:scaleX(0.9846);">axay@gmail.com</span>
<span class="t" id="t70" style="left:526.50px;top:941.11px;font-size:23.6px;color:#1f2229;-webkit-text-stroke:.22px #1f2229;transform:scaleX(0.9859);">KH00023</span>
<span class="t" id="t71" style="left:728.50px;top:941.11px;font-size:23.6px;color:#2441b5;-webkit-text-stroke:.22px #2441b5;transform:scaleX(0.9514);">Cong Hai LLC</span>
<span class="t" id="t72" style="left:1105.00px;top:941.11px;font-size:23.6px;color:#1f2229;-webkit-text-stroke:.22px #1f2229;transform:scaleX(0.9945);">0102345653</span>
<span class="t" id="t73" style="left:1392.50px;top:939.41px;font-size:23.6px;color:#2441b5;-webkit-text-stroke:.22px #2441b5;transform:scaleX(0.9839);">0362 222 222</span>
<span class="t" id="t74" style="left:1606.00px;top:941.11px;font-size:23.6px;color:#2441b5;-webkit-text-stroke:.22px #2441b5;transform:scaleX(0.9899);">peterdanx28@gmail.com</span>
<span class="t" id="t75" style="left:526.50px;top:1012.68px;font-size:23.6px;color:#1f2229;-webkit-text-stroke:.22px #1f2229;transform:scaleX(0.9859);">KH00024</span>
<span class="t" id="t76" style="left:728.50px;top:1012.68px;font-size:23.6px;color:#2441b5;-webkit-text-stroke:.22px #2441b5;transform:scaleX(0.9769);">Minh Nhat JSC</span>
<span class="t" id="t77" style="left:1105.00px;top:1012.68px;font-size:23.6px;color:#1f2229;-webkit-text-stroke:.22px #1f2229;transform:scaleX(0.9945);">0102345654</span>
<span class="t" id="t78" style="left:1392.50px;top:1010.98px;font-size:23.6px;color:#2441b5;-webkit-text-stroke:.22px #2441b5;transform:scaleX(0.9839);">0362 678 678</span>
<span class="t" id="t79" style="left:1606.00px;top:1012.68px;font-size:23.6px;color:#2441b5;-webkit-text-stroke:.22px #2441b5;transform:scaleX(0.9979);">donalt1982@gmai.com</span>
<span class="t" id="t80" style="left:526.50px;top:1084.25px;font-size:23.6px;color:#1f2229;-webkit-text-stroke:.22px #1f2229;transform:scaleX(0.9859);">KH00025</span>
<span class="t" id="t81" style="left:728.50px;top:1084.25px;font-size:23.6px;color:#2441b5;-webkit-text-stroke:.22px #2441b5;transform:scaleX(0.9794);">Minh Long Private Enterprise</span>
<span class="t" id="t82" style="left:1105.00px;top:1084.25px;font-size:23.6px;color:#1f2229;-webkit-text-stroke:.22px #1f2229;transform:scaleX(0.9945);">0102345655</span>
<span class="t" id="t83" style="left:1392.50px;top:1082.55px;font-size:23.6px;color:#2441b5;-webkit-text-stroke:.22px #2441b5;transform:scaleX(0.9839);">0362 822 833</span>
<span class="t" id="t84" style="left:1606.00px;top:1084.25px;font-size:23.6px;color:#2441b5;-webkit-text-stroke:.22px #2441b5;transform:scaleX(1.0115);">abbc111@gmail.com</span>
<span class="t" id="t85" style="left:528.50px;top:1390.02px;font-size:23.6px;color:#1f2229;-webkit-text-stroke:.22px #1f2229;transform:scaleX(1.0033);">Total: 10</span>
<span class="t" id="t86" style="left:1482.00px;top:1390.02px;font-size:23.6px;color:#1f2229;-webkit-text-stroke:.22px #1f2229;transform:scaleX(0.9905);">10</span>
<span class="t" id="t87" style="left:1681.50px;top:1390.02px;font-size:23.6px;color:#1f2229;-webkit-text-stroke:.22px #1f2229;transform:scaleX(0.9770);">1 to 10</span>
<span class="t" id="t88" style="left:1901.50px;top:438.12px;font-size:23.6px;color:#4a63e6;-webkit-text-stroke:0.65px #4a63e6;transform:scaleX(1.0504);">Activity</span>
<span class="t" id="t89" style="left:2047.50px;top:438.12px;font-size:23.6px;color:#5a6072;-webkit-text-stroke:.22px #5a6072;transform:scaleX(0.9831);">Purchase</span>
<span class="t" id="t90" style="left:2193.50px;top:438.12px;font-size:23.6px;color:#5a6072;-webkit-text-stroke:.22px #5a6072;transform:scaleX(0.9886);">Subscriber</span>
<div style="left:0;top:0;width:2423px;height:1527px;overflow:hidden"><span class="t" id="t91" style="left:2349.50px;top:438.12px;font-size:23.6px;color:#5a6072;-webkit-text-stroke:.22px #5a6072;transform:scaleX(1.0331);">Contact</span></div>
<span class="t" id="t92" style="left:1977.50px;top:508.32px;font-size:23.6px;color:#1f2229;-webkit-text-stroke:0.75px #1f2229;transform:scaleX(0.9550);">Create Data</span>
<span class="t" id="t93" style="left:1977.50px;top:546.12px;font-size:23.6px;color:#25272d;-webkit-text-stroke:.22px #25272d;transform:scaleX(0.9886);">Create demo data for customers</span>
<span class="t" id="t94" style="left:1977.50px;top:578.12px;font-size:23.6px;color:#25272d;-webkit-text-stroke:.22px #25272d;transform:scaleX(0.9744);">experience goods</span>
<span class="t" id="t95" style="left:1977.50px;top:619.12px;font-size:21.6px;color:#6b7185;-webkit-text-stroke:.22px #6b7185;transform:scaleX(0.9729);">Nguyen Pham Hai</span>
<span class="t" id="t96" style="left:2185.30px;top:619.12px;font-size:21.6px;color:#6b7185;-webkit-text-stroke:.22px #6b7185;transform:scaleX(1.0647);">05/09/20</span>
<span class="t" id="t97" style="left:1977.50px;top:686.92px;font-size:23.6px;color:#1f2229;-webkit-text-stroke:0.75px #1f2229;transform:scaleX(0.9914);">Customer Meeting Workshop</span>
<span class="t" id="t98" style="left:1977.50px;top:724.72px;font-size:23.6px;color:#25272d;-webkit-text-stroke:.22px #25272d;transform:scaleX(0.9869);">Organise a workshop to meet customers</span>
<span class="t" id="t99" style="left:1977.50px;top:761.92px;font-size:21.6px;color:#6b7185;-webkit-text-stroke:.22px #6b7185;transform:scaleX(0.9729);">Nguyen Pham Hai</span>
<span class="t" id="t100" style="left:2185.30px;top:761.92px;font-size:21.6px;color:#6b7185;-webkit-text-stroke:.22px #6b7185;transform:scaleX(1.0647);">05/09/20</span>
<span class="t" id="t101" style="left:1977.50px;top:830.32px;font-size:23.6px;color:#1f2229;-webkit-text-stroke:0.75px #1f2229;transform:scaleX(1.0087);">Information Extraction</span>
<span class="t" id="t102" style="left:1977.50px;top:868.12px;font-size:23.6px;color:#25272d;-webkit-text-stroke:.22px #25272d;transform:scaleX(1.0068);">Collect customer information</span>
<span class="t" id="t103" style="left:1977.50px;top:905.32px;font-size:21.6px;color:#6b7185;-webkit-text-stroke:.22px #6b7185;transform:scaleX(0.9729);">Nguyen Pham Hai</span>
<span class="t" id="t104" style="left:2185.30px;top:905.32px;font-size:21.6px;color:#6b7185;-webkit-text-stroke:.22px #6b7185;transform:scaleX(1.0647);">05/09/20</span>
<span class="t" id="t105" style="left:1977.50px;top:973.52px;font-size:23.6px;color:#1f2229;-webkit-text-stroke:0.75px #1f2229;transform:scaleX(0.9938);">Product Quotation</span>
<span class="t" id="t106" style="left:1977.50px;top:1011.32px;font-size:23.6px;color:#25272d;-webkit-text-stroke:.22px #25272d;transform:scaleX(0.9807);">Quotation for Cao Ich Sample Product</span>
<span class="t" id="t107" style="left:1977.50px;top:1048.52px;font-size:21.6px;color:#6b7185;-webkit-text-stroke:.22px #6b7185;transform:scaleX(0.9729);">Nguyen Pham Hai</span>
<span class="t" id="t108" style="left:2185.30px;top:1048.52px;font-size:21.6px;color:#6b7185;-webkit-text-stroke:.22px #6b7185;transform:scaleX(1.0647);">05/09/20</span>
<span class="t" id="t109" style="left:1977.50px;top:1116.92px;font-size:23.6px;color:#1f2229;-webkit-text-stroke:0.75px #1f2229;transform:scaleX(0.9799);">VIP Customer</span>
<span class="t" id="t110" style="left:1977.50px;top:1154.72px;font-size:23.6px;color:#25272d;-webkit-text-stroke:.22px #25272d;transform:scaleX(0.9844);">Customer is the Director's friend</span>
<span class="t" id="t111" style="left:1977.50px;top:1191.92px;font-size:21.6px;color:#6b7185;-webkit-text-stroke:.22px #6b7185;transform:scaleX(0.9863);">Trinh Thanh Phuong</span>
<span class="t" id="t112" style="left:2207.80px;top:1191.92px;font-size:21.6px;color:#6b7185;-webkit-text-stroke:.22px #6b7185;transform:scaleX(1.0647);">05/09/20</span>
<span class="t" id="t113" style="left:1977.50px;top:1259.72px;font-size:23.6px;color:#1f2229;-webkit-text-stroke:0.75px #1f2229;transform:scaleX(1.0015);">Inquire about customers</span>
<span class="t" id="t114" style="left:1977.50px;top:1296.62px;font-size:23.6px;color:#25272d;-webkit-text-stroke:.22px #25272d;transform:scaleX(0.9781);">Hello, I am Hoa's staff,</span>
<span class="t" id="t115" style="left:1977.50px;top:1328.62px;font-size:23.6px;color:#25272d;-webkit-text-stroke:.22px #25272d;transform:scaleX(0.9468);">Sen, are you free now?</span>
<span class="t" id="t116" style="left:1977.50px;top:1369.62px;font-size:21.6px;color:#6b7185;-webkit-text-stroke:.22px #6b7185;transform:scaleX(0.9729);">Nguyen Pham Hai</span>
<span class="t" id="t117" style="left:2185.30px;top:1369.62px;font-size:21.6px;color:#6b7185;-webkit-text-stroke:.22px #6b7185;transform:scaleX(1.0647);">05/09/20</span>
<span class="t" id="t118" style="left:1977.50px;top:1438.62px;font-size:23.6px;color:#1f2229;-webkit-text-stroke:0.75px #1f2229;transform:scaleX(0.9825);">Send additional images</span>
<div style="left:1885px;top:414px;width:572px;height:72px;overflow:hidden"><div style="left:536.1999999999998px;top:15.100000000000023px;width:43px;height:43px;border-radius:50%;background:#fff;box-shadow:0 1px 6px rgba(0,0,0,.16)"></div><svg style="left:551px;top:27px" width="14" height="20" viewBox="0 0 14 20" fill="none"><path d="M3.500 3l7 7-7 7" stroke="#4d5264" stroke-width="2" stroke-linecap="round" stroke-linejoin="round"/></svg></div>
<div style="left:0;top:1451.500px;width:2536px;height:76px;background:#fff"></div>
<div style="left:420.5px;top:875.6px;width:43.6px;height:43.6px;border-radius:50%;background:#fff;box-shadow:0 0 0 1px rgba(20,20,40,.035),0 1px 5px rgba(20,20,40,.15)"></div><svg style="left:434.7px;top:887.400px" width="14" height="20" viewBox="0 0 14 20" fill="none"><path d="M10.800 2.600l-7.400 7.400 7.400 7.400" stroke="#4a4e5e" stroke-width="1.9" stroke-linecap="round" stroke-linejoin="round"/></svg>
<div style="left:1861.1px;top:878.7px;width:44px;height:44px;border-radius:50%;background:#fff;box-shadow:0 0 0 1px rgba(20,20,40,.035),0 1px 5px rgba(20,20,40,.15)"></div><svg style="left:1876.600px;top:890.200px" width="14" height="20" viewBox="0 0 14 20" fill="none"><path d="M3.400 2.600l7.400 7.400-7.400 7.400" stroke="#4a4e5e" stroke-width="1.9" stroke-linecap="round" stroke-linejoin="round"/></svg>
</div></body></html>
